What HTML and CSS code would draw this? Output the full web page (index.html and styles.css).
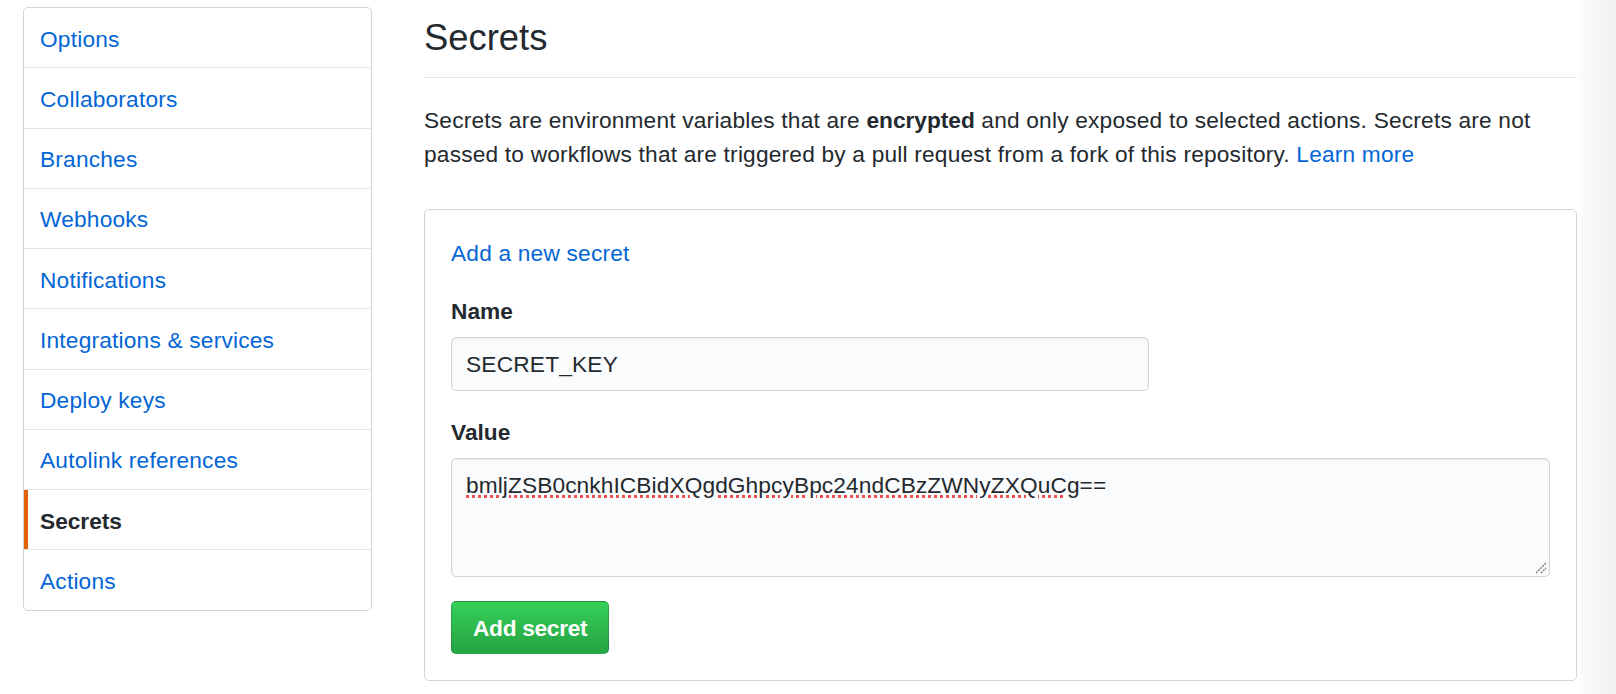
FILE: index.html
```html
<!DOCTYPE html>
<html lang="en">
<head>
<meta charset="utf-8">
<title>Secrets</title>
<link rel="stylesheet" href="styles.css">
</head>
<body>
<div class="layout">
  <nav class="sidebar">
    <a class="menu-item" href="#">Options</a>
    <a class="menu-item" href="#">Collaborators</a>
    <a class="menu-item" href="#">Branches</a>
    <a class="menu-item" href="#">Webhooks</a>
    <a class="menu-item" href="#">Notifications</a>
    <a class="menu-item" href="#">Integrations &amp; services</a>
    <a class="menu-item" href="#">Deploy keys</a>
    <a class="menu-item" href="#">Autolink references</a>
    <a class="menu-item selected" href="#">Secrets</a>
    <a class="menu-item" href="#">Actions</a>
  </nav>
  <main class="main">
    <div class="subhead">
      <h2 class="subhead-heading">Secrets</h2>
    </div>
    <p class="lead">Secrets are environment variables that are <strong>encrypted</strong> and only exposed to selected actions. Secrets are not passed to workflows that are triggered by a pull request from a fork of this repository. <a href="#">Learn more</a></p>
    <div class="box">
      <a class="new-secret" href="#">Add a new secret</a>
      <div class="form-group">
        <label class="label">Name</label>
        <div class="input">SECRET_KEY</div>
      </div>
      <div class="form-group">
        <label class="label">Value</label>
        <div class="textarea"><span class="misspelled">bmljZSB0cnkhICBidXQgdGhpcyBpc24ndCBzZWNyZXQuCg</span>==
          <svg class="grip" width="12" height="12" viewBox="0 0 12 12"><path d="M1 11 L11 1 M6 11 L11 6" stroke="#6a6a6a" stroke-width="1.3" stroke-dasharray="2 1"/></svg>
        </div>
      </div>
      <button class="btn-primary" type="button">Add secret</button>
    </div>
  </main>
</div>
<div class="edge"></div>
</body>
</html>
```

FILE: styles.css
```css
html, body {
  margin: 0;
  padding: 0;
  background: #fff;
}

body {
  display: flex;
  min-height: 694px;
  font-family: "Liberation Sans", Arial, sans-serif;
  font-size: 22.7px;
  line-height: 34px;
  letter-spacing: 0.2px;
  color: #24292e;
}

a {
  color: #0366d6;
  text-decoration: none;
}

.layout {
  flex: 1;
  display: flex;
  align-items: flex-start;
  gap: 52px;
  padding-left: 23px;
}

.sidebar {
  width: 349px;
  box-sizing: border-box;
  margin-top: 7px;
  border: 1px solid #d1d5da;
  border-radius: 5px;
  display: flex;
  flex-direction: column;
  overflow: hidden;
}

.menu-item {
  display: block;
  height: 55.75px;
  line-height: 55.75px;
  padding-top: 3.5px;
  padding-left: 16px;
  border-bottom: 1px solid #e1e4e8;
  color: #0366d6;
}

.menu-item:last-child {
  border-bottom: none;
}

.menu-item.selected {
  color: #24292e;
  font-weight: bold;
  letter-spacing: 0;
  box-shadow: inset 4px 0 0 #e36209;
}

.main {
  width: 1153px;
}

.subhead {
  padding-top: 15px;
  padding-bottom: 17px;
  border-bottom: 1px solid #e1e4e8;
}

.subhead-heading {
  margin: 0;
  font-size: 36.4px;
  line-height: 45px;
  font-weight: normal;
  letter-spacing: 0;
}

.lead {
  margin: 25.4px 0 0;
}

.lead strong {
  font-weight: bold;
  letter-spacing: 0;
}

.box {
  margin-top: 37.6px;
  border: 1px solid #d1d5da;
  border-radius: 5px;
  padding: 26px;
  display: flex;
  flex-direction: column;
  align-items: flex-start;
}

.new-secret {
  display: block;
}

.form-group {
  margin-top: 24.5px;
  display: flex;
  flex-direction: column;
  align-items: stretch;
  align-self: stretch;
}

.label {
  font-weight: bold;
  letter-spacing: 0;
  margin-bottom: 9px;
}

.input {
  width: 698px;
  height: 53.5px;
  box-sizing: border-box;
  border: 1px solid #d1d5da;
  border-radius: 5px;
  background: #fafbfc;
  box-shadow: inset 0 1px 2px rgba(27, 31, 35, 0.075);
  padding: 0 14px;
  display: flex;
  align-items: center;
}

.textarea {
  position: relative;
  height: 118.5px;
  box-sizing: border-box;
  border: 1px solid #d1d5da;
  border-radius: 5px;
  background: #fafbfc;
  box-shadow: inset 0 1px 2px rgba(27, 31, 35, 0.075);
  padding: 9px 14px;
  letter-spacing: 0.1px;
}

.misspelled {
  text-decoration-line: underline;
  text-decoration-style: dotted;
  text-decoration-color: #f0504a;
  text-decoration-thickness: 2.5px;
  text-underline-offset: 2px;
}

.grip {
  position: absolute;
  right: 2px;
  bottom: 2px;
}

.btn-primary {
  margin-top: 24.5px;
  height: 53px;
  box-sizing: border-box;
  padding: 0 21px;
  border: 1px solid rgba(27, 31, 35, 0.2);
  border-radius: 5px;
  background-color: #28a745;
  background-image: linear-gradient(180deg, #34d058 0%, #28a745 90%);
  color: #fff;
  font-family: inherit;
  font-size: 22.7px;
  font-weight: bold;
  letter-spacing: -0.3px;
  line-height: 34px;
}

.edge {
  flex: 0 0 36px;
  background: linear-gradient(90deg, #fbfbfb 0%, #f4f4f4 60%, #f0f0f0 100%);
}
```
